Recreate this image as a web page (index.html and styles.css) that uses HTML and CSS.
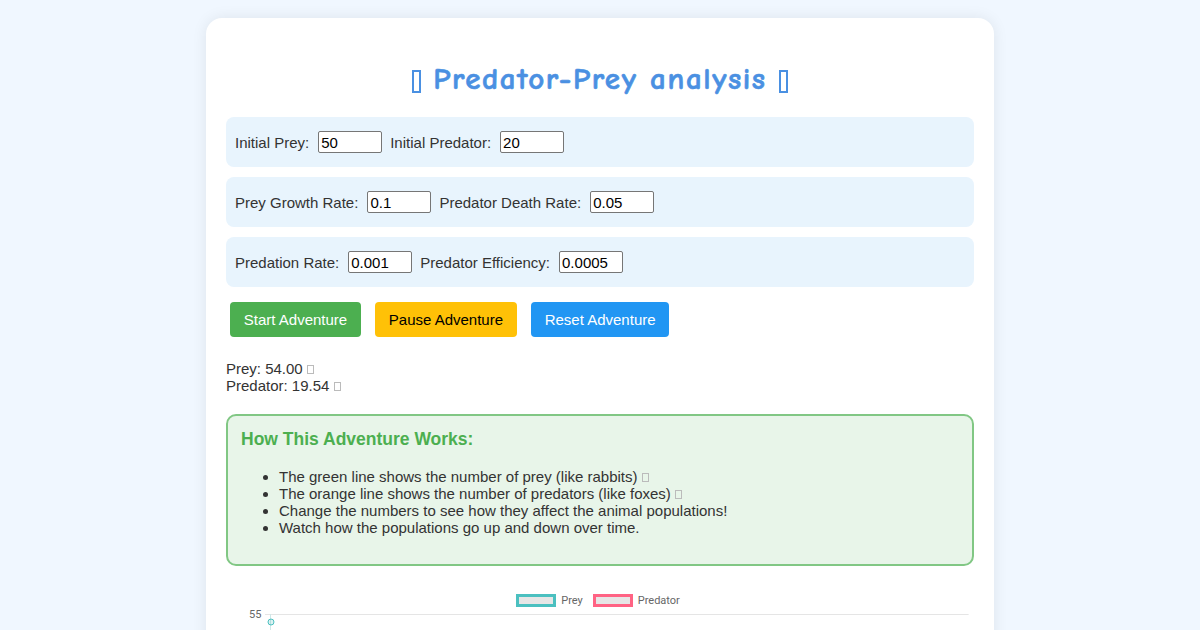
FILE: index.html
```html
<!DOCTYPE html>
<html lang="en">
<head>
    <meta charset="UTF-8">
    <meta name="viewport" content="width=device-width, initial-scale=1.0">
    <title>Predator-Prey analysis</title>
    <link rel="stylesheet" href="styles.css">
</head>
<body>
    <div class="container">
        <h1 class="title"><span class="tofu big" title="fox"></span> Predator-Prey analysis <span class="tofu big" title="rabbit"></span></h1>

        <div class="controls">
            <label>Initial Prey: <input type="number" value="50"></label>
            <label>Initial Predator: <input type="number" value="20"></label>
        </div>
        <div class="controls">
            <label>Prey Growth Rate: <input type="number" value="0.1"></label>
            <label>Predator Death Rate: <input type="number" value="0.05"></label>
        </div>
        <div class="controls">
            <label>Predation Rate: <input type="number" value="0.001"></label>
            <label>Predator Efficiency: <input type="number" value="0.0005"></label>
        </div>

        <div class="buttons">
            <button type="button" class="btn start">Start Adventure</button>
            <button type="button" class="btn pause">Pause Adventure</button>
            <button type="button" class="btn reset">Reset Adventure</button>
        </div>

        <div class="stats">
            <div>Prey: 54.00 <span class="tofu" title="rabbit"></span></div>
            <div>Predator: 19.54 <span class="tofu" title="fox"></span></div>
        </div>

        <div class="info">
            <h3>How This Adventure Works:</h3>
            <ul>
                <li>The green line shows the number of prey (like rabbits) <span class="tofu" title="rabbit"></span></li>
                <li>The orange line shows the number of predators (like foxes) <span class="tofu" title="fox"></span></li>
                <li>Change the numbers to see how they affect the animal populations!</li>
                <li>Watch how the populations go up and down over time.</li>
            </ul>
        </div>

        <div class="chart">
            <div class="legend">
                <span class="key"><i class="box prey"></i>Prey</span>
                <span class="key"><i class="box predator"></i>Predator</span>
            </div>
            <div class="plot">
                <span class="tick">55</span>
                <svg class="grid" width="710" height="30" viewBox="0 0 710 30">
                    <line x1="0" y1="0.5" x2="705" y2="0.5" stroke="#e5e5e5" stroke-width="1"/>
                    <line x1="5.5" y1="0" x2="5.5" y2="30" stroke="#cfe7e7" stroke-width="1"/>
                    <circle cx="6" cy="8" r="3" fill="rgba(75,192,192,0.2)" stroke="rgb(75,192,192)" stroke-width="1"/>
                </svg>
            </div>
        </div>
    </div>
</body>
</html>
```

FILE: styles.css
```css
* {
    box-sizing: border-box;
}

body {
    margin: 0;
    padding: 18px 0 0;
    background-color: #f0f7ff;
    font-family: "Liberation Sans", Arial, sans-serif;
    font-size: 15px;
    color: #333;
}

.container {
    width: 788px;
    margin: 0 auto;
    padding: 20px;
    background-color: #fff;
    border-radius: 16px;
    box-shadow: 0 0 15px rgba(0, 0, 0, 0.08);
}

.title {
    margin: 23px 0 20px;
    text-align: center;
    color: #4a90e2;
    font-family: "Comic Sans MS", "Comic Neue", "DejaVu Sans", sans-serif;
    font-size: 31px;
    letter-spacing: 1.6px;
    line-height: 36px;
    font-weight: bold;
    -webkit-text-stroke: 0.6px #4a90e2;
}

.tofu {
    display: inline-block;
    width: 7px;
    height: 9px;
    border: 1px solid #bbb;
    vertical-align: 0;
}

.tofu.big {
    width: 9px;
    height: 23px;
    border: 2px solid #4a90e2;
    vertical-align: -4px;
}

.controls {
    display: flex;
    align-items: center;
    gap: 8px;
    height: 50px;
    margin-bottom: 10px;
    padding: 0 9px;
    background-color: #e8f4fd;
    border-radius: 8px;
}

.controls label {
    display: flex;
    align-items: center;
    gap: 9px;
}

.controls input {
    width: 64px;
    height: 22px;
    padding: 1px 2px;
    border: 1px solid #767676;
    border-radius: 2px;
    font-family: "Liberation Sans", Arial, sans-serif;
    font-size: 15px;
    color: #000;
    -moz-appearance: textfield;
}

.controls input::-webkit-inner-spin-button,
.controls input::-webkit-outer-spin-button {
    -webkit-appearance: none;
    margin: 0;
}

.buttons {
    display: flex;
    gap: 14px;
    padding: 5px 4px 0;
}

.btn {
    height: 35px;
    padding: 0 13.8px;
    border: 0;
    border-radius: 4px;
    font-family: "Liberation Sans", Arial, sans-serif;
    font-size: 15px;
    color: #fff;
}

.start {
    background-color: #4caf50;
}

.pause {
    background-color: #ffc107;
    color: #000;
}

.reset {
    background-color: #2196f3;
}

.stats {
    margin: 23px 0 0;
    line-height: 17px;
}

.info {
    margin-top: 20px;
    padding: 0 13px;
    height: 152px;
    background-color: #e8f5e9;
    border: 2px solid #81c784;
    border-radius: 10px;
}

.info h3 {
    margin: 13px 0 0;
    color: #4caf50;
    font-size: 17.5px;
}

.info ul {
    margin: 18px 0 0;
    padding-left: 38px;
    line-height: 17px;
}

.chart {
    margin-top: 20px;
}

.legend {
    display: flex;
    justify-content: center;
    gap: 10px;
    padding-top: 8px;
    margin-left: -4px;
    font-family: Roboto, "Liberation Sans", sans-serif;
    font-size: 11px;
    color: #666;
}

.key {
    display: flex;
    align-items: center;
    gap: 5px;
}

.box {
    display: block;
    width: 40px;
    height: 13px;
    border: 3px solid;
    background-color: #e6e6e6;
}

.box.prey {
    border-color: rgb(75, 192, 192);
}

.box.predator {
    border-color: rgb(255, 99, 132);
}

.plot {
    display: flex;
    align-items: flex-start;
    gap: 4px;
    margin-top: 7px;
    padding-left: 23px;
}

.tick {
    font-family: Roboto, "Liberation Sans", sans-serif;
    font-size: 11px;
    line-height: 11px;
    color: #666;
    margin-top: -5px;
}

.grid {
    display: block;
}
```
